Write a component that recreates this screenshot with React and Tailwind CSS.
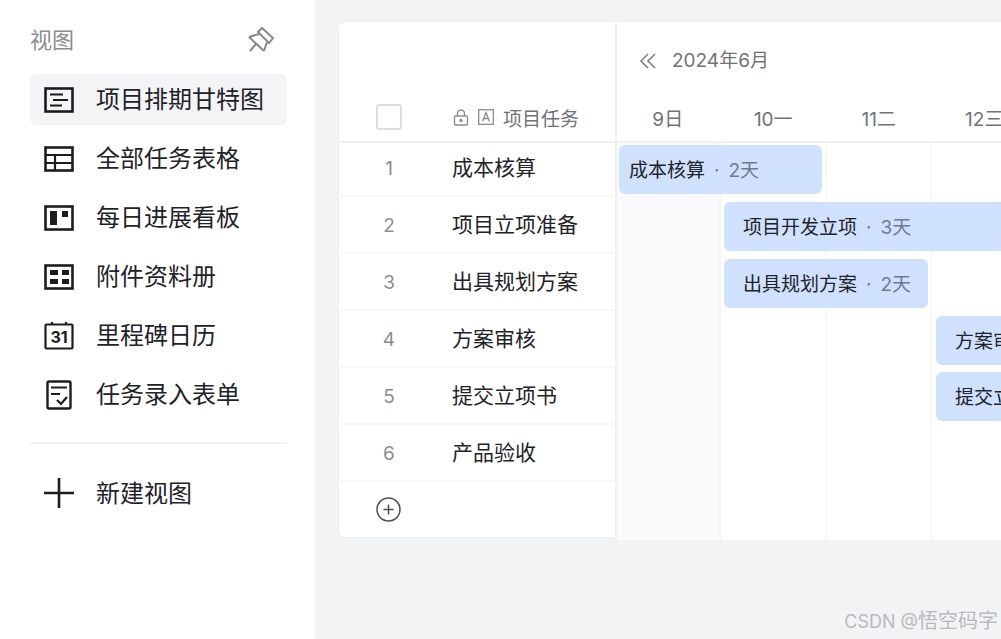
import React from 'react';

const fonts = { fontFamily: 'Inter, "Noto Sans CJK SC", sans-serif' };
const ink = '#1a1c20';

const GanttIcon = () => (
  <svg width="30" height="26" viewBox="0 0 30 26" fill="none" stroke={ink} strokeWidth="2.6">
    <rect x="1.5" y="1.5" width="27" height="23" />
    <path d="M6 7.5h13M9 13h15M6 18.5h12" strokeWidth="2" />
  </svg>
);

const TableIcon = () => (
  <svg width="30" height="26" viewBox="0 0 30 26" fill="none" stroke={ink} strokeWidth="2.6">
    <rect x="1.5" y="1.5" width="27" height="23" />
    <path d="M1.5 9h27M1.5 17h27M11 9v15" strokeWidth="2.2" />
  </svg>
);

const BoardIcon = () => (
  <svg width="30" height="26" viewBox="0 0 30 26" fill="none" stroke={ink} strokeWidth="2.6">
    <rect x="1.5" y="1.5" width="27" height="23" />
    <rect x="6" y="6" width="7" height="14" fill={ink} stroke="none" />
    <rect x="18" y="6" width="6" height="6" fill={ink} stroke="none" />
  </svg>
);

const GridIcon = () => (
  <svg width="30" height="26" viewBox="0 0 30 26" fill="none" stroke={ink} strokeWidth="2.6">
    <rect x="1.5" y="1.5" width="27" height="23" />
    <rect x="6" y="6" width="8" height="5" fill={ink} stroke="none" />
    <rect x="18" y="6" width="7" height="5" fill={ink} stroke="none" />
    <rect x="6" y="15" width="8" height="5" fill={ink} stroke="none" />
    <rect x="18" y="15" width="7" height="5" fill={ink} stroke="none" />
  </svg>
);

const CalendarIcon = () => (
  <svg width="30" height="30" viewBox="0 0 30 30" fill="none" stroke={ink} strokeWidth="2.2">
    <rect x="1.5" y="3.5" width="27" height="24" rx="1" />
    <path d="M8 1v3M22 1v3" />
    <text x="15" y="22" textAnchor="middle" fontSize="16" fontWeight="700" fill={ink} stroke="none" fontFamily="Inter, sans-serif">31</text>
  </svg>
);

const FormIcon = () => (
  <svg width="26" height="30" viewBox="0 0 26 30" fill="none" stroke={ink} strokeWidth="2.4">
    <rect x="1.5" y="1.5" width="23" height="27" rx="1.5" />
    <path d="M5 7.5h16M5 14h9" strokeWidth="2" />
    <path d="M11 20l4 4 6-7" strokeWidth="2.2" />
  </svg>
);

const PlusIcon = () => (
  <svg width="30" height="30" viewBox="0 0 30 30" fill="none" stroke={ink} strokeWidth="2.6">
    <path d="M0 15h30M15 0v30" />
  </svg>
);

// crossed-out pin, traced on the reference at 44x40
const PinIcon = () => (
  <svg className="-my-[4px] -mr-[9px]" width="44" height="40" viewBox="0 0 44 40" fill="none" stroke="#85888d" strokeWidth="2">
    <path d="M23 8l11 10-4 5-11-11z" />
    <path d="M10 17l15 14M10 17l10-3M25 31l3-9" />
    <path d="M17 24l-6 7" />
  </svg>
);

const views = [
  { name: '项目排期甘特图', icon: <GanttIcon />, active: true },
  { name: '全部任务表格', icon: <TableIcon /> },
  { name: '每日进展看板', icon: <BoardIcon /> },
  { name: '附件资料册', icon: <GridIcon /> },
  { name: '里程碑日历', icon: <CalendarIcon /> },
  { name: '任务录入表单', icon: <FormIcon /> },
];

const tasks = ['成本核算', '项目立项准备', '出具规划方案', '方案审核', '提交立项书', '产品验收'];
const days = ['9日', '10一', '11二', '12三'];

const bars = [
  { name: '成本核算', len: '2天', cls: 'left-[2px] top-[2px] w-[203px] pl-[10px]' },
  { name: '项目开发立项', len: '3天', cls: 'left-[107px] top-[59px] w-[310px] pl-[19px]' },
  { name: '出具规划方案', len: '2天', cls: 'left-[107px] top-[116px] w-[204px] pl-[19px]' },
  { name: '方案审核', cls: 'left-[319px] top-[173px] w-[204px] pl-[19px]' },
  { name: '提交立项书', cls: 'left-[319px] top-[229px] w-[204px] pl-[19px]' },
];

const Sidebar = () => (
  <aside className="w-[315px] shrink-0 bg-white px-[30px] pt-[24px]">
    <div className="flex items-center justify-between h-[32px] pr-[11px]">
      <span className="text-[22px] text-[#8a8d92]">视图</span>
      <PinIcon />
    </div>
    <nav className="mt-[18px] flex flex-col gap-[8px] w-[257px]">
      {views.map((view) => (
        <div
          key={view.name}
          className={`flex items-center h-[51px] rounded-md ${view.active ? 'bg-[#f3f4f5]' : ''}`}
        >
          <span className="w-[30px] ml-[14px] flex justify-center">{view.icon}</span>
          <span className="ml-[22px] text-[24px] text-[#1f2329] whitespace-nowrap">{view.name}</span>
        </div>
      ))}
    </nav>
    <div className="mt-[22px] w-[257px] border-t-2 border-[#f0f1f2]" />
    <div className="mt-[23px] flex items-center h-[51px]">
      <span className="w-[30px] ml-[14px] flex justify-center"><PlusIcon /></span>
      <span className="ml-[22px] pt-[2px] text-[24px] text-[#1f2329]">新建视图</span>
    </div>
  </aside>
);

const TaskPanel = () => (
  <div className="w-[278px] shrink-0 bg-white border-r-2 border-[#eff0f1] rounded-l-md shadow-[0_0_0_1px_#eeeff0]">
    <div className="h-[121px] flex items-end pb-[11px] border-b-2 border-[#eff0f1]">
      <span className="ml-[37px] w-[26px] h-[26px] rounded-[3px] border-2 border-[#dcdee0]" />
      <span className="ml-[51px] flex items-center text-[#8a8d92]">
        <svg width="16" height="17" viewBox="0 0 16 17" fill="none" stroke="#8a8d92" strokeWidth="1.4">
          <rect x="1.5" y="7" width="13" height="9" rx="1" />
          <path d="M4.5 7V4.5a3.5 3.5 0 017 0V7" />
          <circle cx="8" cy="11.5" r="1" fill="#8a8d92" />
        </svg>
        <svg className="ml-[9px]" width="16" height="16" viewBox="0 0 16 16" fill="none" stroke="#8a8d92" strokeWidth="1.3">
          <rect x="0.7" y="0.7" width="14.6" height="14.6" />
          <path d="M4.5 12.5L8 3.5l3.5 9M5.7 9.5h4.6" />
        </svg>
        <span className="ml-[9px] text-[19px] text-[#6f7278] leading-[26px] translate-y-[3px]">项目任务</span>
      </span>
    </div>
    {tasks.map((task, i) => (
      <div
        key={task}
        className={`flex items-center border-b-2 border-[#f7f8f8] ${i === 0 ? 'h-[54px]' : 'h-[57px] pt-[3px]'}`}
      >
        <span className="w-[100px] text-center text-[19px] text-[#8a8d92]">{i + 1}</span>
        <span className="ml-[13px] pb-[3px] text-[21px] text-[#1f2329]">{task}</span>
      </div>
    ))}
    <div className="h-[55px] flex items-center pl-[37px]">
      <svg width="25" height="25" viewBox="0 0 25 25" fill="none" stroke="#4b4e53" strokeWidth="1.5">
        <circle cx="12.5" cy="12.5" r="11.5" />
        <path d="M7.5 12.5h10M12.5 7.5v10" />
      </svg>
    </div>
  </div>
);

const Timeline = () => (
  <div className="flex-1 min-w-0 flex flex-col overflow-hidden bg-white shadow-[0_-1px_0_#eeeff0]">
    <div className="h-[121px] flex flex-col border-b-2 border-[#eff0f1]">
      <div className="h-[84px] flex items-center pl-[22px] pb-[6px] text-[#6f7278]">
        <svg width="18" height="18" viewBox="0 0 18 18" fill="none" stroke="#7d8086" strokeWidth="1.6">
          <path d="M9 2L2 9l7 7M16 2L9 9l7 7" />
        </svg>
        <span className="ml-[15px] text-[19px]">2024年6月</span>
      </div>
      <div className="flex-1 flex -ml-[2px]">
        {days.map((d) => (
          <div key={d} className="w-[105.5px] shrink-0 text-center text-[19px] leading-[28px] text-[#6f7278] whitespace-nowrap">
            {d}
          </div>
        ))}
      </div>
    </div>
    <div className="relative h-[397px] flex">
      <div className="w-[104px] shrink-0 bg-[#f9fafb] border-r-2 border-[#f3f4f5]" />
      <div className="w-[106px] shrink-0 border-r-2 border-[#f7f8f8]" />
      <div className="w-[105px] shrink-0 border-r-2 border-[#f7f8f8]" />
      <div className="w-[106px] shrink-0" />
      {bars.map((bar) => (
        <div
          key={bar.name}
          className={`absolute h-[49px] rounded-md bg-[#d0e1fd] flex items-center pt-[3px] whitespace-nowrap text-[19px] text-[#1f2329] ${bar.cls}`}
        >
          {bar.name}
          {bar.len && <span className="text-[#6c7a92] ml-[9px]">·<span className="ml-[9px]">{bar.len}</span></span>}
        </div>
      ))}
    </div>
  </div>
);

export default function App() {
  return (
    <div className="relative flex h-[639px] w-[1001px] overflow-hidden bg-[#f2f3f5]" style={fonts}>
      <Sidebar />
      <main className="flex-1 min-w-0 pl-[24px] pt-[22px]">
        <div className="flex items-start">
          <TaskPanel />
          <Timeline />
        </div>
      </main>
      <span className="absolute right-[3px] bottom-[3px] text-[18px] text-[#b9babc] whitespace-nowrap">
        CSDN @<span className="text-[20px]">悟空码字</span>
      </span>
    </div>
  );
}
